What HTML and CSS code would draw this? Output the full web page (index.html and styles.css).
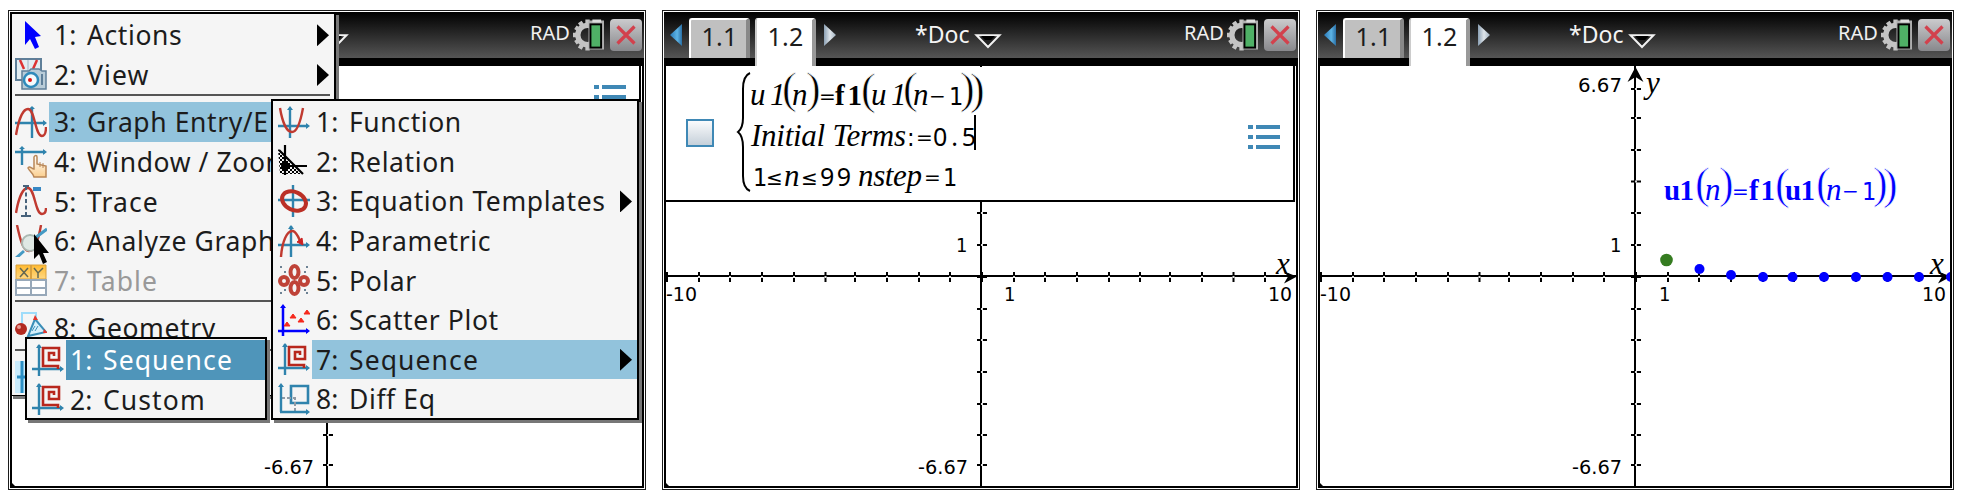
FILE: index.html
```html
<!DOCTYPE html>
<html lang="en">
<head>
<meta charset="utf-8">
<title>Graphs: sequence entry</title>
<link rel="stylesheet" href="styles.css">
</head>
<body>
<svg class="defs" width="0" height="0" aria-hidden="true">
  <defs>
    <linearGradient id="g-blue" x1="0" x2="1"><stop offset="0" stop-color="#2a78b5"/><stop offset=".6" stop-color="#5db4e6"/><stop offset="1" stop-color="#2a6fa5"/></linearGradient>
    <linearGradient id="g-silver" x1="0" x2="1"><stop offset="0" stop-color="#8ba0b4"/><stop offset=".5" stop-color="#dfe5ea"/><stop offset="1" stop-color="#9fb0bf"/></linearGradient>
    <linearGradient id="g-box" x1="0" y1="0" x2="0" y2="1"><stop offset="0" stop-color="#fdfdfe"/><stop offset="1" stop-color="#c3ced8"/></linearGradient>
    <linearGradient id="g-orange" x1="0" y1="0" x2="0" y2="1"><stop offset="0" stop-color="#ffb92e"/><stop offset="1" stop-color="#ffd985"/></linearGradient>
    <linearGradient id="g-hand" x1="0" y1="0" x2="0" y2="1"><stop offset="0" stop-color="#fff"/><stop offset="1" stop-color="#fbcf8f"/></linearGradient>
    <pattern id="p-hatch" width="4" height="4" patternUnits="userSpaceOnUse"><path d="M0 0h2v2h-2zM2 2h2v2h-2z" fill="#000"/></pattern>

    <g id="axes">
      <path d="M4 266H636M319 56V478" class="axis"/>
      <path d="M5 262v10M37 262v10M68 262v10M100 262v10M132 262v10M163.500 262v10M193 262v10M225 262v10M257 262v10M288 262v10M320 262v10M352 262v10M383 262v10M415 262v10M447 262v10M478 262v10M508 262v10M540 262v10M571.500 262v10M603 262v10" class="tick"/>
      <path d="M315 79h10M315 108h10M315 140h10M315 171.500h10M315 203h10M315 235h10M315 267h10M315 299h10M315 330h10M315 362h10M315 394h10M315 425h10M315 455h10" class="tick"/>
      <path d="M37 266v2M68 266v2M100 266v2M132 266v2M163.500 266v2M193 266v2M225 266v2M257 266v2M288 266v2M352 266v2M383 266v2M415 266v2M447 266v2M478 266v2M508 266v2M540 266v2M571.500 266v2M603 266v2M319 79h2M319 108h2M319 140h2M319 171.500h2M319 203h2M319 235h2M319 299h2M319 330h2M319 362h2M319 394h2M319 425h2M319 455h2" class="tick-gap"/>
      <path d="M2 471l7 7h-7z" fill="#000"/>
    </g>
    <g id="x-arrow"><path d="M635 266.500l-13-5 4 5-4 7z" fill="#000"/></g>
    <g id="list"><path d="M0 0h5v4H0zM0 10h5v4H0zM0 20h5v4H0zM8 0h24v4H8zM8 10h24v4H8zM8 20h24v4H8z" fill="#3f88b5"/></g>

    <symbol id="i-prev" viewBox="0 0 12 22"><path d="M12 0v22L0 11z" fill="url(#g-blue)"/></symbol>
    <symbol id="i-next" viewBox="0 0 12 22"><path d="M0 0v22L12 11z" fill="url(#g-silver)"/></symbol>
    <symbol id="i-drop" viewBox="0 0 28 15"><path d="M2.500 1.200h23L14 13z" fill="#222" stroke="#f2f2f2" stroke-width="2"/><path d="M7 2h14l-4 4h-6z" fill="#000"/></symbol>
    <symbol id="i-gear" viewBox="0 0 32 32">
      <circle cx="15" cy="16" r="10" fill="none" stroke="#c4c4c4" stroke-width="5.500"/>
      <path d="M15 0v6M7 2.500l3 4.500M2.500 8l4.500 3M0 16h6M2.500 24l4.500-3M7 30l3-5M15 32v-6" stroke="#c4c4c4" stroke-width="4.500"/>
      <path d="M16 1h16v30H16z" fill="#aeaeae"/><path d="M20 0h9v3h-9z" fill="#ddd"/>
      <path d="M17 4h13v26H17z" fill="#000"/><path d="M19 6h9v22h-9z" fill="#4fb066"/>
    </symbol>
    <symbol id="i-close" viewBox="0 0 20 20"><path d="M1.500 1.500l17 17M18.500 1.500l-17 17" stroke="#d2414d" stroke-width="3.200"/></symbol>

    <symbol id="m-pointer" viewBox="0 0 32 32"><path d="M10 2v24l5-6 5 10 4-2-4-10 6-1z" fill="#00f"/></symbol>
    <symbol id="m-view" viewBox="0 0 32 32">
      <path d="M1 1h25v21H1z" fill="#e3edf2" stroke="#5f7f99" stroke-width="2"/><path d="M13 2v14" stroke="#9db4c5"/>
      <path d="M5 2l4 9M22 2l-4 9" stroke="#d33" stroke-width="2.500"/>
      <path d="M7 13h7l2-2h8l3 2h4v18H7z" fill="#b9ccd8" stroke="#5f7f99" stroke-width="1.500"/>
      <circle cx="16" cy="22" r="7" fill="#f5fafc" stroke="#2f8abb" stroke-width="2.500"/><circle cx="15" cy="22" r="2" fill="#d11"/><path d="M27 16v11" stroke="#5f7f99" stroke-width="2"/>
    </symbol>
    <symbol id="m-graph" viewBox="0 0 32 32"><path d="M17 1v31M0 17h30" class="ib"/><path d="M14 3l3-3 3 3zM28 14l4 3-4 3z" fill="#2f83ad"/><path d="M1 29C3 17 7 3 13 3c7 0 7 27 14 27 3 0 4-4 4-9" class="ir"/></symbol>
    <symbol id="m-window" viewBox="0 0 32 32"><path d="M0 6h30M7 2v17" class="ib"/><path d="M4 3l3-3 3 3zM28 3l4 3-4 3z" fill="#2f83ad"/><path d="M19 31c-1-4-4-5-6-9 1-3 4 1 6 1V11c1-2 3-2 3 0v7l9 2v11z" fill="url(#g-hand)" stroke="#b98757" stroke-width="1.500"/><path d="M25 16v5M28 17v5" stroke="#b98757"/></symbol>
    <symbol id="m-trace" viewBox="0 0 32 32"><path d="M1 28C3 16 7 3 13 3c7 0 7 26 14 26 3 0 4-3 4-6" class="ir"/><path d="M11 1v29" stroke="#47627b" stroke-width="2" stroke-dasharray="4 2.500"/><path d="M6 31h10M8 1h6" stroke="#47627b" stroke-width="2"/><path d="M18 4h8" stroke="#3888c4" stroke-width="4"/></symbol>
    <symbol id="m-analyze" viewBox="0 0 32 32"><path d="M2 0c3 14 6 26 12 26S24 12 26 0" class="ir"/><circle cx="15" cy="18" r="8" fill="#dfe8e4" stroke="#abb8b2" stroke-width="2"/><path d="M0 34l9-8M20 13l12-9" stroke="#459ac4" stroke-width="3"/></symbol>
    <symbol id="m-table" viewBox="0 0 32 32"><path d="M1 1h30v14H1z" fill="url(#g-orange)" stroke="#d9a13f"/><path d="M1 16h30v15H1zM16 16v15M1 24h30" fill="#fff" stroke="#97a8b9" stroke-width="2"/><path d="M16 1v14" stroke="#d9a13f" stroke-width="2"/><path d="M5 4l8 9M13 4l-8 9M19 4l4 5 5-5M23 9v5" stroke="#646851" stroke-width="1.500" fill="none"/></symbol>
    <symbol id="m-geo" viewBox="0 0 32 32"><path d="M7 12V1h14v8" stroke="#9edcfa" stroke-width="2" fill="none"/><path d="M20 7L13 24l18-4z" fill="#d6effa" stroke="#3a8eb8" stroke-width="2"/><path d="M17 19l3-5M20 19l3-5" stroke="#3a8eb8"/><circle cx="6" cy="17" r="6" fill="#b22a20"/><circle cx="4" cy="15" r="2" fill="#e89a92"/><path d="M20 3l3 5h-5zM29 17l4 4h-5z" fill="#e3352b"/></symbol>
    <symbol id="m-set" viewBox="0 0 32 32"><path d="M0 0h32v32H0z" fill="#c9ebfc"/><path d="M7 0v32M2 16h10" stroke="#2c8fc4" stroke-width="3"/></symbol>
    <symbol id="m-func" viewBox="0 0 32 32"><path d="M12 2v30M0 20h30" class="ib"/><path d="M9 4l3-4 3 4zM28 17l4 3-4 3z" fill="#2f83ad"/><path d="M2 2c2 12 6 24 12 24S23 13 25 2" class="ir"/></symbol>
    <symbol id="m-rel" viewBox="0 0 32 32"><path d="M0 4l24 25H2z" fill="url(#p-hatch)"/><path d="M1 5l24 24M7 0v30M5 21h24" stroke="#000" stroke-width="2.200"/><circle cx="7" cy="21" r="4"/></symbol>
    <symbol id="m-eq" viewBox="0 0 32 32"><path d="M15 0v32M0 15h32" class="ib"/><ellipse cx="16" cy="16" rx="12.500" ry="9" transform="rotate(25 16 16)" fill="none" stroke="#bb3026" stroke-width="4"/></symbol>
    <symbol id="m-param" viewBox="0 0 32 32"><path d="M13 1v31M0 20h30" class="ib"/><path d="M10 4l3-4 3 4zM28 17l4 3-4 3z" fill="#2f83ad"/><path d="M3 32C4 17 9 5 15 6c4 1 6 8 8 12" class="ir"/><path d="M19 17l5-4 1 7z" fill="#c22" stroke="#c22"/></symbol>
    <symbol id="m-polar" viewBox="0 0 32 32"><g fill="none" stroke="#bf4338" stroke-width="4"><ellipse cx="16.500" cy="8" rx="4" ry="6"/><ellipse cx="16.500" cy="24" rx="4" ry="6"/><circle cx="6" cy="17" r="4"/><circle cx="26" cy="17" r="4"/></g><path d="M2 2h2v2H2zM28 2h2v2h-2zM6 7h2v2H6zM26 7h2v2h-2zM2 28h2v2H2zM28 28h2v2h-2zM6 25h2v2H6zM26 25h2v2h-2z" fill="#6d8294"/></symbol>
    <symbol id="m-scatter" viewBox="0 0 32 32"><path d="M5 2v30M0 27h30" stroke="#00f" stroke-width="2.500"/><path d="M2 4l3-4 3 4zM28 24l4 3-4 3z" fill="#00f"/><path d="M6 22l3-4 3 4zM12 14l3-4 3 4zM20 18l3-4 3 4zM26 10l3-4 3 4z" fill="#f5281c" stroke="#f5281c"/></symbol>
    <symbol id="m-seq" viewBox="0 0 32 32"><path d="M7 1v31M0 25h30" class="ib"/><path d="M4 4l3-4 3 4zM28 22l4 3-4 3z" fill="#2f83ad"/><path d="M26 25v-3H11V4h16v12H17V9h5v3" fill="none" stroke="#b8271d" stroke-width="2.600"/></symbol>
    <symbol id="m-diff" viewBox="0 0 32 32"><path d="M13 3h17v17H13z" fill="none" stroke="#2f83ad" stroke-width="2.600"/><path d="M3 15h14v14" fill="none" stroke="#8f9ba5" stroke-width="2" stroke-dasharray="4 2"/><path d="M3 2v27M2 29h28" class="ib"/><path d="M0 4l3-4 3 4zM28 26l4 3-4 3z" fill="#2f83ad"/></symbol>
  </defs>
</svg>

<main class="screens">
  <section class="screen">
    <header class="bar">
      <div class="doc doc-only"><span class="doc-name">*Doc</span><svg class="drop"><use href="#i-drop"/></svg></div>
      <div class="status"><span class="angle">RAD</span><svg class="gear"><use href="#i-gear"/></svg><span class="close"><svg><use href="#i-close"/></svg></span></div>
    </header>
    <div class="strip"></div>
    <svg class="plot" viewBox="2 56 634 422">
      <use href="#axes"/>
      <path d="M4 191H632V56" class="entry-edge"/>
      <use href="#list" x="586" y="75"/>
      <text class="num" x="256" y="464" textLength="50" lengthAdjust="spacingAndGlyphs">-6.67</text>
      <path d="M3 56V477H635V56" class="frame"/>
    </svg>

    <nav class="menu menu-main">
      <div class="item"><svg><use href="#m-pointer"/></svg><div class="label"><b>1:</b><span>Actions</span><i class="more"></i></div></div>
      <div class="item"><svg><use href="#m-view"/></svg><div class="label"><b>2:</b><span class="wide">View</span><i class="more"></i></div></div>
      <hr>
      <div class="item open"><svg><use href="#m-graph"/></svg><div class="label"><b>3:</b><span>Graph Entry/E</span></div></div>
      <div class="item"><svg><use href="#m-window"/></svg><div class="label"><b>4:</b><span>Window / Zoom</span></div></div>
      <div class="item"><svg><use href="#m-trace"/></svg><div class="label"><b>5:</b><span class="wide">Trace</span></div></div>
      <div class="item"><svg><use href="#m-analyze"/></svg><div class="label"><b>6:</b><span>Analyze Graph</span></div></div>
      <div class="item off"><svg><use href="#m-table"/></svg><div class="label"><b>7:</b><span class="wide">Table</span></div></div>
      <hr>
      <div class="item"><svg><use href="#m-geo"/></svg><div class="label"><b>8:</b><span>Geometry</span></div></div>
      <hr class="tight">
      <div class="item"><svg><use href="#m-set"/></svg></div>
    </nav>

    <nav class="menu menu-type">
      <div class="item"><svg><use href="#m-func"/></svg><div class="label"><b>1:</b><span>Function</span></div></div>
      <div class="item"><svg><use href="#m-rel"/></svg><div class="label"><b>2:</b><span>Relation</span></div></div>
      <div class="item"><svg><use href="#m-eq"/></svg><div class="label"><b>3:</b><span>Equation Templates</span><i class="more"></i></div></div>
      <div class="item"><svg><use href="#m-param"/></svg><div class="label"><b>4:</b><span>Parametric</span></div></div>
      <div class="item"><svg><use href="#m-polar"/></svg><div class="label"><b>5:</b><span>Polar</span></div></div>
      <div class="item"><svg><use href="#m-scatter"/></svg><div class="label"><b>6:</b><span>Scatter Plot</span></div></div>
      <div class="item open"><svg><use href="#m-seq"/></svg><div class="label"><b>7:</b><span class="wide">Sequence</span><i class="more"></i></div></div>
      <div class="item"><svg><use href="#m-diff"/></svg><div class="label"><b>8:</b><span>Diff Eq</span></div></div>
    </nav>

    <nav class="menu menu-seq">
      <div class="item picked"><svg><use href="#m-seq"/></svg><div class="label"><b>1:</b><span class="wide">Sequence</span></div></div>
      <div class="item"><svg><use href="#m-seq"/></svg><div class="label"><b>2:</b><span class="wide">Custom</span></div></div>
    </nav>

    <svg class="cursor" viewBox="0 0 16 32"><path d="M1 1v25l5-5 4 10 4-2-4-9h6z" fill="#000"/></svg>
  </section>

  <section class="screen">
    <header class="bar">
      <svg class="prev"><use href="#i-prev"/></svg>
      <span class="tab">1.1</span><span class="tab tab-on">1.2</span>
      <svg class="next"><use href="#i-next"/></svg>
      <div class="doc"><span class="doc-name">*Doc</span><svg class="drop"><use href="#i-drop"/></svg></div>
      <div class="status"><span class="angle">RAD</span><svg class="gear"><use href="#i-gear"/></svg><span class="close"><svg><use href="#i-close"/></svg></span></div>
    </header>
    <div class="strip"></div>
    <svg class="plot" viewBox="2 56 634 422">
      <use href="#axes"/><use href="#x-arrow"/>
      <text class="num" x="294" y="241.500">1</text>
      <text class="num" x="342" y="291">1</text>
      <text class="num" x="4" y="291" textLength="31" lengthAdjust="spacingAndGlyphs">-10</text>
      <text class="num" x="606" y="291" textLength="24" lengthAdjust="spacingAndGlyphs">10</text>
      <text class="num" x="256" y="464" textLength="50" lengthAdjust="spacingAndGlyphs">-6.67</text>
      <text class="var" x="614" y="264">x</text>
      <path d="M4 57H632V191H4z" fill="#fff"/>
      <path d="M4 191H632V56" class="entry-edge"/>
      <path d="M25 110h26v26H25z" fill="url(#g-box)" stroke="#3f88b5" stroke-width="2"/>
      <path d="M88 63Q81 66 81 79V108Q81 118 76 122Q81 126 81 137V166Q81 178 88 181" fill="none" stroke="#000" stroke-width="2"/>
      <g class="math">
        <text class="it" x="88" y="95">u</text><text class="it" x="108" y="95">1</text>
        <text class="par" x="120" y="93">(</text><text class="it" x="130" y="95">n</text><text class="par" x="144" y="93">)</text>
        <text class="op" x="157" y="93">=</text><text class="bd" x="173" y="95" textLength="27">f1</text>
        <text class="par" x="199" y="94">(</text><text class="it" x="209" y="95">u</text><text class="it" x="229" y="95">1</text>
        <text class="par" x="241" y="93">(</text><text class="it" x="251" y="95">n</text><text class="op" x="267" y="93">−</text><text class="dg" x="287" y="95">1</text>
        <text class="par" x="298" y="93">)</text><text class="par" x="308" y="94">)</text>
        <text class="it" x="89" y="136" textLength="155">Initial Terms</text><text class="dg" x="245" y="136">:</text><text class="op" x="254" y="134">=</text>
        <text class="nm" x="271" y="136" textLength="43">0.5</text>
        <text class="dg" x="91" y="176">1</text><text class="op" x="104" y="175">≤</text><text class="it" x="122" y="176">n</text><text class="op" x="139" y="175">≤</text>
        <text class="nm" x="158" y="176" textLength="31">99</text><text class="it" x="196" y="176" textLength="64">nstep</text><text class="op" x="262" y="174">=</text><text class="dg" x="281" y="176">1</text>
      </g>
      <path d="M313 105v35" stroke="#000" stroke-width="2"/>
      <use href="#list" x="586" y="115"/>
      <path d="M3 56V477H635V56" class="frame"/>
    </svg>
  </section>

  <section class="screen">
    <header class="bar">
      <svg class="prev"><use href="#i-prev"/></svg>
      <span class="tab">1.1</span><span class="tab tab-on">1.2</span>
      <svg class="next"><use href="#i-next"/></svg>
      <div class="doc"><span class="doc-name">*Doc</span><svg class="drop"><use href="#i-drop"/></svg></div>
      <div class="status"><span class="angle">RAD</span><svg class="gear"><use href="#i-gear"/></svg><span class="close"><svg><use href="#i-close"/></svg></span></div>
    </header>
    <div class="strip"></div>
    <svg class="plot" viewBox="2 56 634 422">
      <use href="#axes"/><use href="#x-arrow"/>
      <path d="M319.500 57l8 15-8-5-8 5z" fill="#000"/>
      <text class="num" x="262" y="81.500" textLength="44" lengthAdjust="spacingAndGlyphs">6.67</text>
      <text class="var" x="330" y="83">y</text>
      <text class="num" x="294" y="241.500">1</text>
      <text class="num" x="343" y="291">1</text>
      <text class="num" x="4" y="291" textLength="31" lengthAdjust="spacingAndGlyphs">-10</text>
      <text class="num" x="606" y="291" textLength="24" lengthAdjust="spacingAndGlyphs">10</text>
      <text class="num" x="256" y="464" textLength="50" lengthAdjust="spacingAndGlyphs">-6.67</text>
      <text class="var" x="614" y="264">x</text>
      <g class="math blue">
        <text class="bd" x="348" y="190" textLength="30">u1</text>
        <text class="par" x="379" y="188">(</text><text class="it" x="389" y="190">n</text><text class="par" x="403" y="188">)</text>
        <text class="op" x="416" y="188">=</text><text class="bd" x="433" y="190" textLength="26">f1</text>
        <text class="par" x="459" y="189">(</text><text class="bd" x="469" y="190" textLength="30">u1</text>
        <text class="par" x="500" y="188">(</text><text class="it" x="510" y="190">n</text><text class="op" x="526" y="188">−</text><text class="dg" x="546" y="190">1</text>
        <text class="par" x="557" y="188">)</text><text class="par" x="567" y="189">)</text>
      </g>
      <circle cx="350.500" cy="250" r="6.300" fill="#357c20"/>
      <g fill="#00f">
        <circle cx="383.500" cy="259" r="5"/><circle cx="415" cy="265" r="5"/><circle cx="447" cy="267" r="5"/><circle cx="476.500" cy="267" r="5"/><circle cx="508" cy="267" r="5"/><circle cx="540" cy="267" r="5"/><circle cx="571.500" cy="267" r="5"/><circle cx="603" cy="267" r="5"/><circle cx="635" cy="267" r="5"/>
      </g>
      <path d="M3 56V477H635V56" class="frame"/>
    </svg>
  </section>
</main>
</body>
</html>
```
FILE: styles.css
```css
* { box-sizing: border-box; }
body { margin: 0; background: #fff; font-family: "Noto Sans", "Open Sans", sans-serif; color: #1c1c1c; }
.defs { position: absolute; }
.ib { fill: none; stroke: #2f83ad; stroke-width: 2.4; }
.ir { fill: none; stroke: #c03a30; stroke-width: 2.4; }

.screens { display: flex; gap: 16px; padding: 10px 8px; }
.screen { position: relative; width: 638px; height: 480px; padding: 1px; border: 1px solid #1c1c1c; flex: none; }

/* Title bar */
.bar { display: flex; align-items: center; height: 46px; padding: 0 2px 0 6px; background: linear-gradient(#000, #555); }
.strip { height: 8px; background: #000; }
.prev, .next { width: 12px; height: 22px; }
.tab { width: 61px; height: 40px; margin: 6px 0 0 7px; padding-left: 2px; border: 2px solid #fff; border-right: 4px solid #888; border-bottom: 0; border-radius: 3px 3px 0 0; background: #c0c0c0; font-size: 25px; line-height: 32px; text-align: center; letter-spacing: .3px; }
.tab-on { position: relative; height: 48px; margin: 14px 0 0 5px; background: #fff; border-color: #fff #999 #fff #ccc; }
.next { margin-left: 8px; }
.doc { display: flex; align-items: center; margin-left: 79px; color: #f4f4f4; }
.doc-only { margin-left: 246px; }
.doc-name { width: 59px; font-size: 23px; line-height: 44px; margin-top: -2px; }
.drop { width: 28px; height: 15px; margin-top: 12px; }
.status { display: flex; align-items: center; margin-left: auto; }
.angle { width: 43px; color: #f0f0f0; font-size: 20px; line-height: 40px; margin-top: -4px; }
.gear { width: 31px; height: 32px; margin-right: 6px; }
.close { display: flex; align-items: center; justify-content: center; width: 32px; height: 32px; border-radius: 4px; background: linear-gradient(#cbcbcd, #88888c); }
.close svg { width: 20px; height: 20px; }

/* Plot */
.plot { display: block; width: 634px; height: 422px; }
.axis, .tick { stroke: #000; stroke-width: 2; fill: none; }
.tick-gap { stroke: #ddd; stroke-width: 2; }
.frame { fill: none; stroke: #000; stroke-width: 2; }
.entry-edge { fill: none; stroke: #000; stroke-width: 2; }
.num { font: 20px "DejaVu Sans Condensed", "DejaVu Sans", sans-serif; }
.var { font: italic 31px "Liberation Serif", serif; }
.math { fill: #000; }
.blue { fill: #00f; }
.it { font: italic 31px "Liberation Serif", serif; }
.bd { font: bold 29px "Liberation Serif", serif; }
.par { font: 44px "Liberation Serif", serif; stroke: #fff; stroke-width: .7px; }
.op { font: 20px "DejaVu Sans", sans-serif; }
.dg { font: 25px "DejaVu Sans Condensed", "DejaVu Sans", sans-serif; }
.nm { font: 25px "Noto Sans", sans-serif; }

/* Menus */
.menu { position: absolute; padding: 1px 0; border: 2px solid #000; background: #f5f5f5; box-shadow: 3px 3px 0 #777; overflow: hidden; }
.menu-main { left: 1px; top: 1px; width: 326px; height: 384px; border-bottom-width: 1px; }
.menu-type { left: 262px; top: 88px; width: 368px; height: 321px; }
.menu-seq { left: 16px; top: 326px; width: 242px; height: 83px; }
.item { display: flex; align-items: center; height: 39.6px; }
.item > svg { flex: none; width: 32px; height: 32px; margin: 0 2px 0 5px; }
.menu-main .item > svg { margin-left: 3px; }
.label { display: flex; align-items: center; flex: 1; height: 100%; padding: 1px 0 0 4px; font-size: 26.5px; letter-spacing: .6px; white-space: nowrap; }
.menu-main .label { padding-left: 5px; }
.label b { width: 33px; font-weight: 400; letter-spacing: 0; }
.wide { letter-spacing: 1.1px; }
.more { width: 12px; height: 22px; margin: 0 5px 0 auto; background: #000; clip-path: polygon(0 0, 100% 50%, 0 100%); }
.open .label { background: #92c3dc; }
.picked .label { background: #4f95ba; color: #fff; }
.off .label { color: #999; }
.menu hr { height: 2px; margin: 0 4px 6px 3px; border: 0; background: #555; }
.menu .tight { margin-top: 1px; }
.cursor { position: absolute; left: 24px; top: 222px; width: 16px; height: 32px; }
```
